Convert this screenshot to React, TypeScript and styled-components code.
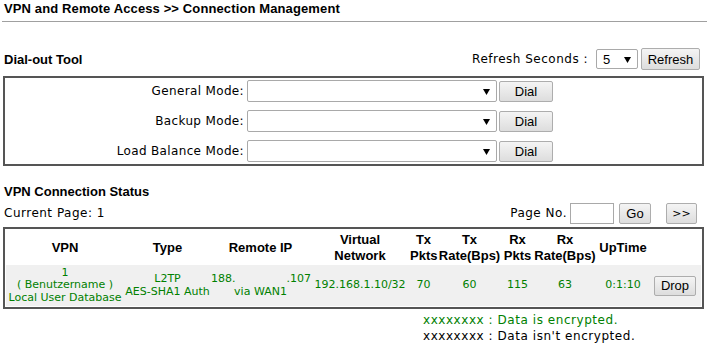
import React from 'react';
import styled, { createGlobalStyle } from 'styled-components';

const GlobalStyle = createGlobalStyle`
  body {
    margin: 0;
    background: #ffffff;
    font-family: "DejaVu Sans", Verdana, sans-serif;
    color: #000000;
  }
`;

const Page = styled.div`
  width: 707px;
`;

const Title = styled.div`
  padding: 1px 0 0 4px;
  font-family: "Liberation Sans", Arial, sans-serif;
  font-weight: 700;
  font-size: 13px;
  line-height: 15px;
  letter-spacing: 0.12px;
`;

const Rule = styled.div`
  margin: 5px 0 0 2px;
  height: 1px;
  background: #a0a0a0;
`;

const SectionBar = styled.div`
  margin-top: 25px;
  height: 24px;
  padding: 0 7px 0 4px;
  display: flex;
  align-items: center;
  justify-content: space-between;
`;

const SectionTitle = styled.div<{ $top?: number }>`
  margin-top: ${p => p.$top ?? 0}px;
  padding-left: ${p => (p.$top ? 4 : 0)}px;
  font-family: "Liberation Sans", Arial, sans-serif;
  font-weight: 700;
  font-size: 13px;
  line-height: 15px;
`;

const Group = styled.div`
  display: flex;
  align-items: center;
  gap: 3px;
`;

const Label = styled.span`
  font-size: 12px;
  letter-spacing: 0.5px;
  white-space: nowrap;
`;

const SelectBox = styled.div<{ $w: number; $h: number; $ml?: number }>`
  box-sizing: border-box;
  width: ${p => p.$w}px;
  height: ${p => p.$h}px;
  margin-left: ${p => p.$ml ?? 0}px;
  border: 1px solid #a9a9a9;
  border-radius: 2px;
  background: #ffffff;
  display: flex;
  align-items: center;
  justify-content: space-between;
  padding: 0 6px 0 6px;
  font-family: "Liberation Sans", Arial, sans-serif;
  font-size: 13px;
`;

const Arrow = () => (
  <svg width="7" height="7" viewBox="0 0 7 7">
    <polygon points="0,1 7,1 3.5,7" fill="#000" />
  </svg>
);

const Select: React.FC<{ w: number; h: number; ml?: number; value?: string }> = ({ w, h, ml, value }) => (
  <SelectBox $w={w} $h={h} $ml={ml}>
    <span>{value ?? ''}</span>
    <Arrow />
  </SelectBox>
);

const Button = styled.button<{ $w: number; $h?: number; $ml?: number; $small?: boolean }>`
  box-sizing: border-box;
  width: ${p => p.$w}px;
  height: ${p => p.$h ?? 21}px;
  margin: 0 0 0 ${p => p.$ml ?? 0}px;
  padding: 0;
  border: 1px solid #adadad;
  border-radius: 2px;
  background: linear-gradient(#f4f4f4, #dddddd);
  color: #000000;
  font-family: ${p => (p.$small ? '"DejaVu Sans", Verdana, sans-serif' : '"Liberation Sans", Arial, sans-serif')};
  font-size: ${p => (p.$small ? 11 : 13)}px;
  line-height: 1;
`;

const Panel = styled.div`
  margin: 5px 3px 0 3px;
  height: 86px;
  border: 2px solid #555555;
  display: flex;
  flex-direction: column;
  gap: 4px;
`;

const ModeRow = styled.div`
  height: 26px;
  display: grid;
  grid-template-columns: 239px 250px 54px;
  column-gap: 3px;
  align-items: center;
`;

const ModeLabel = styled.span`
  font-size: 12px;
  letter-spacing: 0.35px;
  text-align: right;
  margin-right: -3px;
  padding-right: 3px;
`;

const DialCell = styled.div`
  margin-left: -1px;
`;

const PagerBar = styled.div`
  margin-top: 3px;
  height: 22px;
  padding: 0 10px 0 4px;
  display: flex;
  align-items: center;
  justify-content: space-between;
`;

const PageInput = styled.div`
  box-sizing: border-box;
  width: 44px;
  height: 21px;
  border: 1px solid #a9a9a9;
  background: #ffffff;
`;

const TableFrame = styled.div`
  margin: 3px 3px 0 3px;
  border: 2px solid #555555;
  padding: 1px;
`;

const StatusTable = styled.table`
  width: 695px;
  table-layout: fixed;
  border-collapse: collapse;
  border-spacing: 0;
`;

const HeadCell = styled.th`
  height: 35px;
  padding: 0;
  font-family: "Liberation Sans", Arial, sans-serif;
  font-weight: 700;
  font-size: 13px;
  line-height: 16px;
  text-align: center;
  vertical-align: middle;
  white-space: nowrap;
`;

const DataRow = styled.tr`
  background: #f0f0f0;
`;

const DataCell = styled.td`
  height: 41px;
  padding: 0;
  font-size: 11px;
  line-height: 12.5px;
  color: #008000;
  text-align: center;
  vertical-align: middle;
  white-space: nowrap;
`;

const IpGap = styled.span`
  display: inline-block;
  width: 51px;
`;

const Legend = styled.div`
  margin: 3px 0 0 423px;
  font-size: 12px;
  letter-spacing: 0.55px;
  line-height: 16px;
`;

const LegendLine = styled.div<{ $on?: boolean }>`
  color: ${p => (p.$on ? '#008000' : '#000000')};
`;

const columns = [118, 87, 99, 100, 27, 65, 31, 64, 52, 52];

const modes = ['General Mode:', 'Backup Mode:', 'Load Balance Mode:'];

export default function App() {
  return (
    <Page>
      <GlobalStyle />
      <Title>VPN and Remote Access &gt;&gt; Connection Management</Title>
      <Rule />

      <SectionBar>
        <SectionTitle>Dial-out Tool</SectionTitle>
        <Group>
          <Label>Refresh Seconds :</Label>
          <Select w={42} h={20} ml={5} value="5" />
          <Button $w={59} $h={22}>Refresh</Button>
        </Group>
      </SectionBar>

      <Panel>
        {modes.map(m => (
          <ModeRow key={m}>
            <ModeLabel>{m}</ModeLabel>
            <Select w={250} h={22} />
            <DialCell>
              <Button $w={54}>Dial</Button>
            </DialCell>
          </ModeRow>
        ))}
      </Panel>

      <SectionTitle $top={18}>VPN Connection Status</SectionTitle>

      <PagerBar>
        <Label>Current Page: 1</Label>
        <Group>
          <Label>Page No.</Label>
          <PageInput />
          <Button $w={32} $ml={2}>Go</Button>
          <Button $w={31} $ml={12} $small>&gt;&gt;</Button>
        </Group>
      </PagerBar>

      <TableFrame>
        <StatusTable>
          <colgroup>
            {columns.map((w, i) => (
              <col key={i} style={{ width: w }} />
            ))}
          </colgroup>
          <thead>
            <tr>
              <HeadCell>VPN</HeadCell>
              <HeadCell>Type</HeadCell>
              <HeadCell>Remote IP</HeadCell>
              <HeadCell>Virtual<br />Network</HeadCell>
              <HeadCell>Tx<br />Pkts</HeadCell>
              <HeadCell>Tx<br />Rate(Bps)</HeadCell>
              <HeadCell>Rx<br />Pkts</HeadCell>
              <HeadCell>Rx<br />Rate(Bps)</HeadCell>
              <HeadCell>UpTime</HeadCell>
              <HeadCell />
            </tr>
          </thead>
          <tbody>
            <DataRow>
              <DataCell>1<br />( Benutzername )<br />Local User Database</DataCell>
              <DataCell>L2TP<br />AES-SHA1 Auth</DataCell>
              <DataCell>188.<IpGap />.107<br />via WAN1</DataCell>
              <DataCell>192.168.1.10/32</DataCell>
              <DataCell>70</DataCell>
              <DataCell>60</DataCell>
              <DataCell>115</DataCell>
              <DataCell>63</DataCell>
              <DataCell>0:1:10</DataCell>
              <DataCell>
                <Button $w={42} $h={20}>Drop</Button>
              </DataCell>
            </DataRow>
          </tbody>
        </StatusTable>
      </TableFrame>

      <Legend>
        <LegendLine $on>xxxxxxxx : Data is encrypted.</LegendLine>
        <LegendLine>xxxxxxxx : Data isn't encrypted.</LegendLine>
      </Legend>
    </Page>
  );
}
